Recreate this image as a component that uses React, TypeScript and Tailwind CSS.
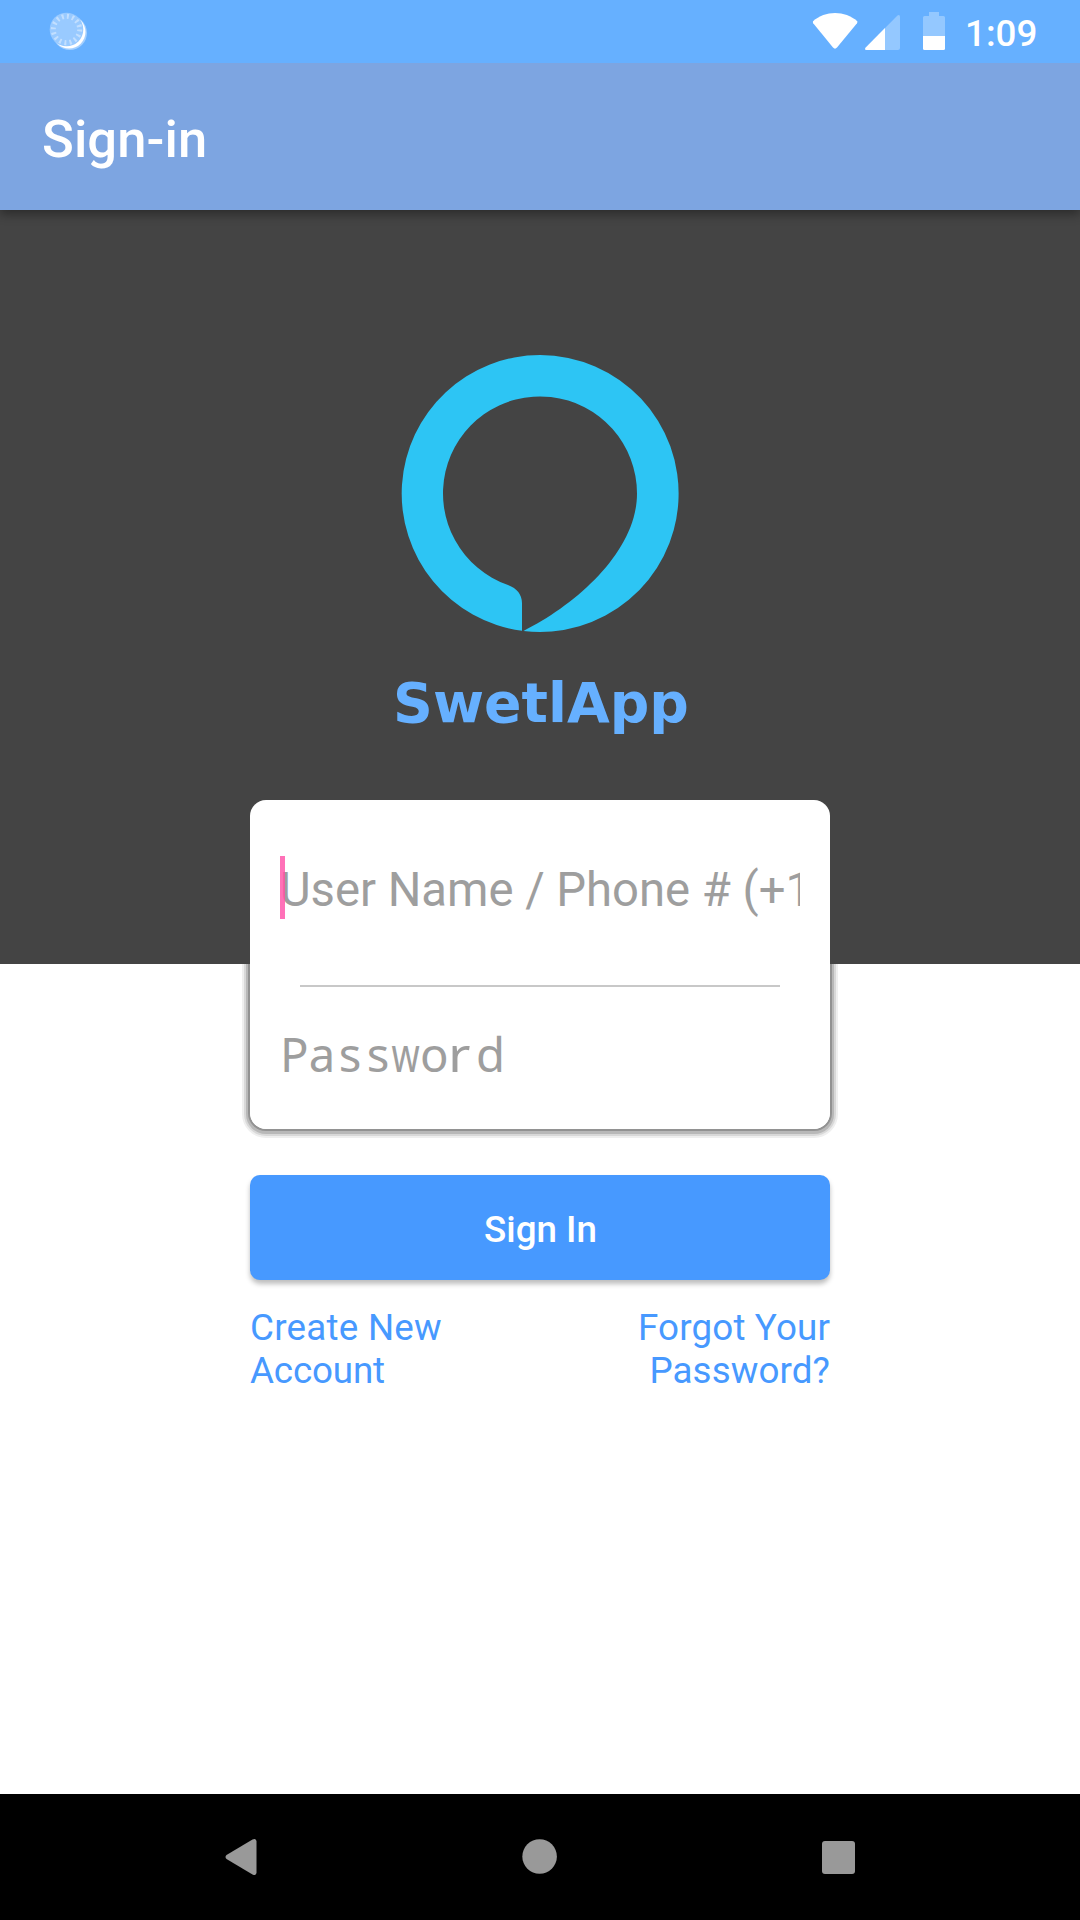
function StatusBar() {
  return (
    <div className="relative z-20 flex h-[63px] shrink-0 items-center justify-between bg-[#66b0ff] pl-[49px] pr-[43px]">
      <svg className="h-10 w-10" viewBox="0 0 40 40">
        <circle cx="20.8" cy="20.8" r="17.2" fill="#fff" fillOpacity="0.4" />
        <circle cx="20" cy="20" r="16.5" fill="#fff" />
        <circle cx="17.5" cy="17.5" r="16.8" fill="#99caff" />
        <circle cx="17.5" cy="17.5" r="13.2" fill="none" stroke="#c2dfff" strokeWidth="5" strokeDasharray="2 3.184" />
      </svg>
      <div className="flex items-center">
        <svg className="h-[63px] w-[148px]" viewBox="812 0 148 63">
          <path d="M813 21.3C825 10.3 845 10.3 857.3 21.3Q857.6 22.3 857 23.2L837 47.6Q835 49.8 833 47.6L813.2 23.2Q812.6 22.3 813 21.3Z" fill="#fff" />
          <path d="M865.5 47.8L897.5 15.4Q900 14 900 17V48Q900 50 898 50H866.5Q864.3 50 865.5 47.8Z" fill="#94c8ff" />
          <path d="M865.5 47.8L885 28V50H866.5Q864.3 50 865.5 47.8Z" fill="#fff" />
          <path d="M929 12H939V16H943.5Q945 16 945 17.5V36H923V17.5Q923 16 924.5 16H929Z" fill="#94c8ff" />
          <path d="M923 36H945V48.5Q945 50 943.5 50H924.5Q923 50 923 48.5Z" fill="#fff" />
        </svg>
        <span className="w-[77px] pl-[5px] pt-[4px] text-[36.75px] font-medium leading-[43px] text-white">1:09</span>
      </div>
    </div>
  );
}

function Logo() {
  return (
    <svg className="h-[278px] w-[278px]" viewBox="401 355 278 278">
      <path
        d="M522 630.8A138.5 138.5 0 0 1 540.2 355A138.5 138.5 0 1 1 523.5 631C577 604 637 551 637 493.5A97 97 0 1 0 508 585Q521.6 590 522 603Z"
        fill="#2dc5f4"
      />
    </svg>
  );
}

/* Placeholder set on a fixed 28px pitch. */
function MonoPlaceholder() {
  return (
    <div className="mt-[35px] flex text-[47.25px] leading-[64px] text-[#9e9e9e] font-['Noto_Sans',sans-serif]">
      <span className="w-[28px] text-center">P</span>
      <span className="w-[28px] text-center">a</span>
      <span className="w-[28px] text-center">s</span>
      <span className="w-[28px] text-center">s</span>
      <span className="flex w-[28px] justify-center"><span className="scale-x-[0.76]">w</span></span>
      <span className="w-[28px] text-center">o</span>
      <span className="w-[28px] origin-left scale-x-[1.15]">r</span>
      <span className="w-[28px] text-center">d</span>
    </div>
  );
}

function NavBar() {
  return (
    <div className="flex h-[126px] shrink-0 items-center justify-between bg-black px-[225px]">
      <svg className="h-10 w-8" viewBox="225 1837 32 40">
        <path d="M226.5 1855L252.5 1839.4Q256.5 1837.8 256.5 1841.5V1872.5Q256.5 1876.2 252.5 1874.4L226.5 1859Q224.5 1857 226.5 1855Z" fill="#999" />
      </svg>
      <svg className="h-9 w-9" viewBox="0 0 36 36">
        <circle cx="17.6" cy="17.5" r="17.3" fill="#999" />
      </svg>
      <div className="h-[33px] w-[33px] rounded-[3px] bg-[#999]" />
    </div>
  );
}

export default function App() {
  return (
    <div className="flex h-[1920px] w-[1080px] flex-col overflow-hidden bg-white font-['Roboto',sans-serif]">
      <StatusBar />
      <header className="z-10 flex h-[147px] shrink-0 items-center bg-[#7da5e1] pl-[42px] pt-[4px] shadow-[0_4px_10px_rgba(0,0,0,0.38)]">
        <h1 className="text-[52.5px] font-medium leading-[62px] tracking-[0.1px] text-white">Sign-in</h1>
      </header>
      <main className="relative z-0 flex grow flex-col items-center">
        <section className="relative z-10 flex h-[754px] w-full shrink-0 flex-col items-center bg-[#444] pt-[145px]">
          <Logo />
          <div className="mt-[38px] pl-[2px] text-[55.3px] font-bold leading-[64px] text-[#66b0ff] font-['DejaVu_Sans',sans-serif]">SwetlApp</div>
        </section>
        <div className="relative -mt-[164px] h-[329px] w-[580px] shrink-0">
          <div className="absolute inset-0 rounded-[16px] shadow-[0_0_0_2px_#929292,0_1px_0_4px_#b8b8b8,0_1px_0_6px_#d8d8d8,0_1px_0_8px_#efefef]" />
          <form className="relative z-20 flex h-full flex-col rounded-[16px] bg-white px-[30px]">
            <div className="relative mt-[56px] h-[68px] overflow-hidden whitespace-nowrap text-[47.25px] leading-[68px] tracking-[-0.03px] text-[#9e9e9e]">
              User Name / Phone # (+1
              <span className="absolute left-0 top-0 h-[63px] w-[5px] bg-[#ff4da6] opacity-80" />
            </div>
            <div className="mx-5 mt-[61px] h-[2px] bg-[#c8c8c8]" />
            <MonoPlaceholder />
          </form>
        </div>
        <button type="button" className="mt-[46px] flex h-[105px] w-[580px] shrink-0 items-center justify-center rounded-[10px] bg-[#4799ff] pl-[1px] pt-[4px] text-[36.75px] font-medium leading-[43px] text-white shadow-[0_4px_5px_rgba(0,0,0,0.26)]">
          Sign In
        </button>
        <div className="mt-[26px] flex w-[580px] justify-between text-[36.75px] leading-[43px] text-[#4799ff]">
          <a><span className="tracking-[0.25px]">Create New</span><br /><span className="tracking-[-0.15px]">Account</span></a>
          <a className="text-right"><span className="tracking-[0.15px]">Forgot Your</span><br /><span className="tracking-[0.1px]">Password?</span></a>
        </div>
      </main>
      <NavBar />
    </div>
  );
}
